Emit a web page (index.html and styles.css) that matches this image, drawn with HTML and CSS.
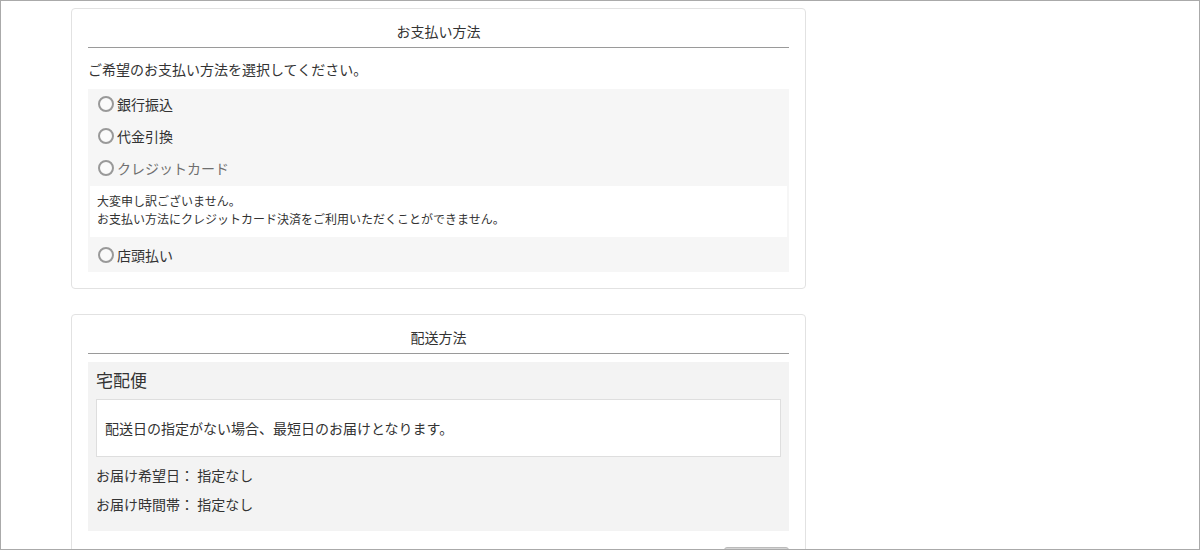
FILE: index.html
```html
<!DOCTYPE html>
<html lang="ja">
<head>
<meta charset="utf-8">
<title>ご注文手続き</title>
<link rel="stylesheet" href="styles.css">
</head>
<body>
<div class="frame">
  <div class="column">
    <section class="card">
      <h2 class="card-title">お支払い方法</h2>
      <p class="lead">ご希望のお支払い方法を選択してください。</p>
      <div class="options">
        <label class="option"><span class="radio"></span>銀行振込</label>
        <label class="option"><span class="radio"></span>代金引換</label>
        <label class="option disabled"><span class="radio"></span>クレジットカード</label>
        <div class="notice">
          <p>大変申し訳ございません。</p>
          <p>お支払い方法にクレジットカード決済をご利用いただくことができません。</p>
        </div>
        <label class="option last"><span class="radio"></span>店頭払い</label>
      </div>
    </section>

    <section class="card">
      <h2 class="card-title">配送方法</h2>
      <div class="delivery">
        <h3 class="carrier">宅配便</h3>
        <div class="info-box">配送日の指定がない場合、最短日のお届けとなります。</div>
        <p class="detail">お届け希望日： 指定なし</p>
        <p class="detail">お届け時間帯： 指定なし</p>
      </div>
      <div class="actions">
        <button class="btn" type="button" aria-label="変更"></button>
      </div>
    </section>
  </div>
</div>
</body>
</html>
```

FILE: styles.css
```css
html, body {
  margin: 0;
  padding: 0;
  background: #fff;
}

body {
  font-family: "Noto Sans CJK JP", "Noto Sans", sans-serif;
  font-size: 14px;
  color: #333;
}

.frame {
  box-sizing: border-box;
  width: 1200px;
  height: 550px;
  border: 1px solid #aaa;
  overflow: hidden;
  padding: 7px 0 0 70px;
}

.column {
  width: 735px;
  display: flex;
  flex-direction: column;
  gap: 25px;
}

.card {
  box-sizing: border-box;
  border: 1px solid #e2e2e2;
  border-radius: 4px;
  padding: 0 16px 16px;
  background: #fff;
}

.card-title {
  margin: 0;
  padding: 12px 0 6px;
  font-size: 14px;
  font-weight: normal;
  line-height: 20px;
  text-align: center;
  border-bottom: 1px solid #9a9a9a;
}

.lead {
  margin: 11px 0 10px;
  line-height: 20px;
}

.options {
  background: #f6f6f6;
  display: flex;
  flex-direction: column;
}

.option {
  display: flex;
  align-items: center;
  gap: 3px;
  padding: 5px 10px 7px;
  line-height: 20px;
  height: 32px;
  box-sizing: border-box;
}

.option.last {
  height: 35px;
  padding: 8px 10px 7px;
}

.option.disabled {
  color: #6f6f6f;
}

.radio {
  box-sizing: border-box;
  width: 16px;
  height: 16px;
  border: 2px solid #999;
  border-radius: 50%;
  background: #fafafa;
  flex: none;
}

.notice {
  margin: 1px 2px 0;
  background: #fff;
  padding: 6px 7px 9px;
  font-size: 12px;
  line-height: 18px;
}

.notice p {
  margin: 0;
}

.delivery {
  margin-top: 8px;
  background: #f3f3f3;
  padding: 7px 8px 17px;
}

.carrier {
  margin: 0 0 8px;
  font-size: 17px;
  font-weight: normal;
  line-height: 22px;
}

.info-box {
  background: #fff;
  border: 1px solid #dedede;
  padding: 18px 8px;
  line-height: 20px;
}

.detail {
  margin: 8px 0 0;
  line-height: 20px;
}

.detail + .detail {
  margin-top: 9px;
}

.actions {
  display: flex;
  justify-content: flex-end;
  padding-top: 16px;
}

.btn {
  width: 65px;
  height: 32px;
  border: 1px solid #bbb;
  border-radius: 3px;
  background: #d4d4d4;
}
```
